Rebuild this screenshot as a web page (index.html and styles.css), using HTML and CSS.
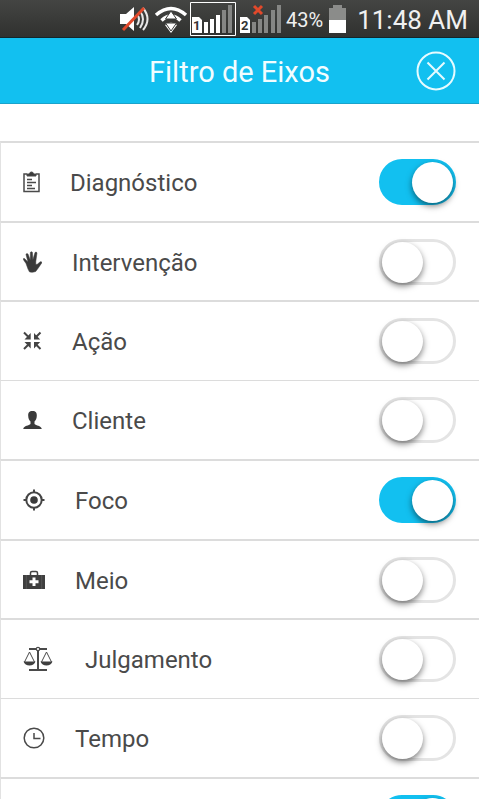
FILE: index.html
```html
<!DOCTYPE html>
<html lang="pt-BR">
<head>
<meta charset="utf-8">
<meta name="viewport" content="width=device-width, initial-scale=1">
<title>Filtro de Eixos</title>
<link rel="stylesheet" href="styles.css">
</head>
<body>
<div class="status">
  <svg class="mute" width="30" height="28" viewBox="0 0 30 28" aria-hidden="true">
    <path d="M1 9h6l8-7v24l-8-7H1z" fill="#fff"/>
    <path d="M18 9q4 5.500 0 11M21 6q6 8 0 17M24 3q9 11 0 22" fill="none" stroke="#e8e8e8" stroke-width="2"/>
    <path d="M4 25L25 3" stroke="#e2492b" stroke-width="3"/>
  </svg>
  <svg class="wifi" width="34" height="28" viewBox="0 0 34 28" aria-hidden="true">
    <path d="M2 10Q17-3 32 10M7.500 15.500Q17 6.500 26.500 15.500" fill="none" stroke="#fff" stroke-width="3.500"/>
    <path d="M11 20Q17 15 23 20L17 28z" fill="#fff"/>
    <path d="M17 6l5.500 8h-11zM17 26l-5.500-8h11z" fill="#fff" stroke="#3b3c3a" stroke-width="1"/>
  </svg>
  <svg width="46" height="34" viewBox="0 0 46 34" aria-hidden="true">
    <path d="M.5.500h45v33H.5z" fill="none" stroke="#fff"/>
    <path d="M2 15h7l3 3v13H2z" fill="#fff"/>
    <text class="sim" x="3" y="28">1</text>
    <path d="M14 20h4v11h-4zM20 17h4v14h-4zM26 13h4v18h-4z" fill="#fff"/>
    <path d="M32 8h4v23h-4zM38 3h4v28h-4z" fill="#858684"/>
  </svg>
  <svg class="second" width="42" height="34" viewBox="0 0 42 34" aria-hidden="true">
    <path d="M0 15h7l3 3v13H0z" fill="#fff"/>
    <text class="sim" x="1" y="28">2</text>
    <path d="M12 20h4v11h-4zM18 17h4v14h-4zM24 13h4v18h-4zM31 8h4v23h-4zM37 3h4v28h-4z" fill="#858684"/>
    <path d="M14 4l8 8M22 4l-8 8" stroke="#e2492b" stroke-width="3"/>
  </svg>
  <span class="percent">43%</span>
  <svg width="17" height="28" viewBox="0 0 17 28" aria-hidden="true">
    <path d="M4 0h9v3h4v12H0V3h4z" fill="#8b8c8a"/>
    <path d="M0 15h17v13H0z" fill="#fff"/>
  </svg>
  <time class="time">11:48 AM</time>
</div>
<header class="header">
  <h1 class="title">Filtro de Eixos</h1>
  <button class="close" type="button" aria-label="Fechar">
    <svg width="40" height="40" viewBox="0 0 40 40" fill="none" stroke="#e6fbff" aria-hidden="true">
      <circle cx="20" cy="20" r="18.500" stroke-width="2"/>
      <path d="M11.500 11.500l17 17M28.500 11.500l-17 17" stroke-width="2"/>
    </svg>
  </button>
</header>
<main class="list">
  <label class="row">
    <svg width="17" height="22" viewBox="0 0 17 22" fill="none" stroke="#4a4a4a" aria-hidden="true">
      <path d="M4 3H1v17.500h15V3h-3" stroke-width="1.500"/>
      <path d="M4 5V3h2.500a2 2 0 0 1 4 0H13v2z" fill="#3a3a3a"/>
      <path d="M4 8.500h5M4 11.500h9M4 14.500h5M4 17.500h8" stroke-width="1.500"/>
    </svg>
    <span class="name">Diagnóstico</span><input class="switch" type="checkbox" checked>
  </label>
  <label class="row">
    <svg width="19" height="22" viewBox="0 0 19 22" aria-hidden="true">
      <path d="M5 18L3 12.500.3 8.500q-.3-1.500 1.200-1L5 11 3 3.500q.4-1.500 2-.5l2.200 6L7.400 1.300q1-1.300 2 0l.5 7.500L12 1.500q1.200-1 2 .3L12.800 10.500V13.500l1.500-.3 3-2.500q1.700-.3 1.600 1L15.300 17l-2.600 3.500q-3.300 1.500-6.300.3z" fill="#3a3a3a" stroke="#3a3a3a" stroke-width=".5"/>
    </svg>
    <span class="name">Intervenção</span><input class="switch" type="checkbox">
  </label>
  <label class="row">
    <svg width="19" height="20" viewBox="0 0 19 20" aria-hidden="true">
      <path d="M1 1.500L5 5.500M17.500 1.500l-4 4M1 18l4-4M17.500 18l-4-4" stroke="#444" stroke-width="2"/>
      <path d="M7.700 2v6.500H1.500zM11 2v6.500h6.200zM7.700 17.500V11H1.500zM11 17.500V11h6.200z" fill="#444"/>
    </svg>
    <span class="name">Ação</span><input class="switch" type="checkbox">
  </label>
  <label class="row thin">
    <svg width="19" height="20" viewBox="0 0 19 20" aria-hidden="true">
      <path d="M9.500 1c3.300 0 4.500 2 4.300 4.700-.1 2.800-1 4.600-2.300 5.800v2.500c1.500 1.800 6.500 1.500 7.300 5H.2c.8-3.500 5.800-3.200 7.300-5v-2.500C6.200 10.300 5.300 8.500 5.200 5.700 5 3 6.200 1 9.500 1z" fill="#3a3a3a"/>
    </svg>
    <span class="name">Cliente</span><input class="switch" type="checkbox">
  </label>
  <label class="row">
    <svg width="22" height="22" viewBox="0 0 22 22" fill="none" stroke="#444" aria-hidden="true">
      <circle cx="11" cy="11" r="7.700" stroke-width="2"/>
      <circle cx="11" cy="11" r="3.800" fill="#3a3a3a" stroke="none"/>
      <path d="M11 .5V4M11 18v3.500M.5 11H4M18 11h3.500" stroke-width="2"/>
    </svg>
    <span class="name">Foco</span><input class="switch" type="checkbox" checked>
  </label>
  <label class="row">
    <svg width="22" height="20" viewBox="0 0 22 20" aria-hidden="true">
      <path d="M7.500 6V3q0-1.500 1.500-1.500h4q1.500 0 1.500 1.500v3" fill="none" stroke="#444" stroke-width="1.500"/>
      <path d="M0 5h22v14H0z" fill="#3f3f3f"/>
      <path d="M3.300 5v14M18.700 5v14" stroke="#555"/>
      <path d="M11 7.500v8.500M6.500 11.700h9" stroke="#fff" stroke-width="3"/>
    </svg>
    <span class="name">Meio</span><input class="switch" type="checkbox">
  </label>
  <label class="row">
    <svg width="32" height="26" viewBox="0 0 32 26" fill="none" stroke="#4a4a4a" aria-hidden="true">
      <path d="M6 3h7M17 3h7M15 5v19M6 24h18" stroke-width="2"/>
      <circle cx="15" cy="3" r="1.700" stroke-width="1.200"/>
      <path d="M1.500 16L6.500 6l5 10M18.500 16l5-10 5 10" stroke-width="1"/>
      <path d="M.5 15.500h12q-1.500 4-6 4t-6-4zM17.500 15.500h12q-1.500 4-6 4t-6-4z" fill="#3f3f3f" stroke="none"/>
    </svg>
    <span class="name">Julgamento</span><input class="switch" type="checkbox">
  </label>
  <label class="row thin">
    <svg width="22" height="22" viewBox="0 0 22 22" fill="none" stroke="#4a4a4a" stroke-width="1.500" aria-hidden="true">
      <circle cx="11" cy="11" r="9.800"/>
      <path d="M11 6v5.500h6.500"/>
    </svg>
    <span class="name">Tempo</span><input class="switch" type="checkbox">
  </label>
  <label class="row">
    <span class="name"></span><input class="switch" type="checkbox" checked aria-label="Eixo">
  </label>
</main>
</body>
</html>
```
FILE: styles.css
```css
* { box-sizing: border-box; }
body {
  margin: 0;
  height: 100vh;
  overflow: hidden;
  background: #fff;
  color: #4a4a4a;
  font-family: Roboto, "Liberation Sans", sans-serif;
}
svg { display: block; flex: none; }
.status {
  display: flex;
  align-items: center;
  justify-content: flex-end;
  gap: 7px;
  height: 38px;
  padding-right: 11px;
  background: linear-gradient(#444543, #30312f);
  border-bottom: 1px solid #12262c;
  color: #f0f0f0;
  white-space: nowrap;
}
.mute { margin-right: -2px; }
.wifi { margin-right: -5px; }
.second { margin: 0 -3px; }
.sim { font: bold 13px Roboto, sans-serif; fill: #333; }
.percent { margin-right: -1px; padding-top: 3px; font-size: 20px; }
.time { margin-left: 4px; padding-top: 3px; font-size: 26px; }
.header {
  display: grid;
  grid-template-columns: 1fr auto 1fr;
  align-items: center;
  height: 66px;
  padding: 0 23px;
  background: #12c0f0;
  border-bottom: 1px solid #1aa3cb;
}
.title {
  grid-column: 2;
  margin: 0;
  padding-top: 2px;
  color: #f2fdff;
  font-size: 29px;
  font-weight: 400;
}
.close {
  justify-self: end;
  padding: 0;
  border: 0;
  background: none;
}
.list { padding-top: 37px; }
.row {
  display: flex;
  align-items: center;
  height: 80px;
  padding: 0 23px 0 22px;
  border-top: 2px solid #dcdcdc;
  border-left: 1px solid #e2e2e2;
}
.row:nth-child(even) { height: 79px; }
.thin { border-top: 1px solid #dcdcdc; }
.name {
  flex: 1;
  margin-left: 30px;
  padding-top: 2px;
  font-size: 24px;
}
.switch {
  appearance: none;
  flex: none;
  width: 77px;
  height: 46px;
  margin: 0;
  padding: 0;
  border: 3px solid #e4e4e4;
  border-radius: 23px;
  background: #fff;
}
.switch::before {
  content: "";
  display: block;
  width: 41px;
  height: 41px;
  border-radius: 50%;
  background: #fff;
  box-shadow: 0 3px 6px rgba(0, 0, 0, 0.5);
}
.switch:checked { border-color: #12c0f0; background: #12c0f0; }
.switch:checked::before { margin-left: auto; }
```
